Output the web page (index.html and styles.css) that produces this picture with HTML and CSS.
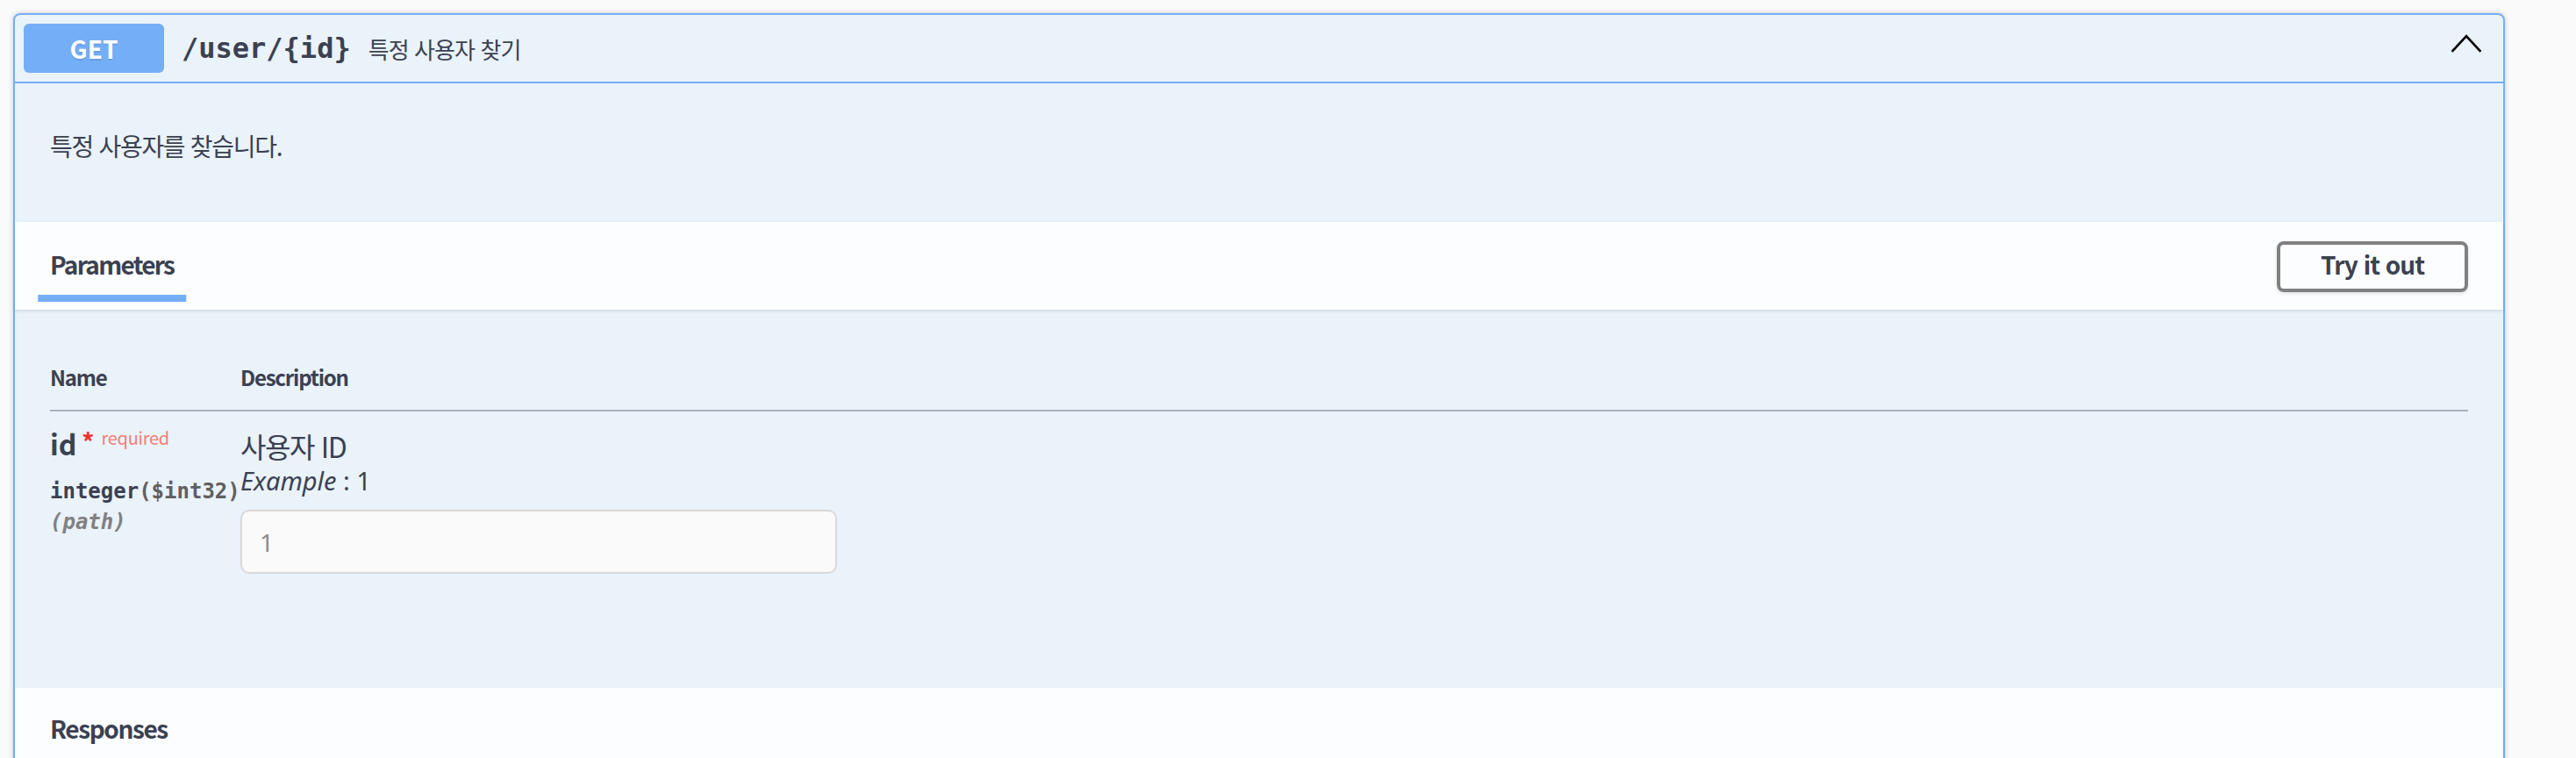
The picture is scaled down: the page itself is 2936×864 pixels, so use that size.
FILE: index.html
```html
<!DOCTYPE html>
<html lang="ko">
<head>
<meta charset="utf-8">
<title>GET /user/{id}</title>
<link rel="stylesheet" href="styles.css">
</head>
<body>
<div class="opblock">
  <div class="summary">
    <span class="method">GET</span>
    <span class="path">/user/{id}</span>
    <span class="summary-desc">특정 사용자 찾기</span>
    <svg class="arrow" width="36" height="22" viewBox="0 0 36 22" aria-hidden="true">
      <polyline points="1.6,19.8 18,2.2 34.4,19.8" fill="none" stroke="#000" stroke-width="2.7"/>
    </svg>
  </div>
  <div class="op-body">
    <div class="desc-wrapper"><p>특정 사용자를 찾습니다.</p></div>
    <div class="section-header">
      <div class="tab-item"><span class="tab-title">Parameters</span></div>
      <button class="try-out">Try it out</button>
    </div>
    <div class="table-container">
      <table class="parameters">
        <colgroup><col class="col-name"><col class="col-desc"></colgroup>
        <thead>
          <tr><th>Name</th><th>Description</th></tr>
        </thead>
        <tbody>
          <tr>
            <td class="cell-name">
              <div class="param-name">id<span class="req-star">*</span><span class="req-label">required</span></div>
              <div class="param-type">integer<span class="param-format">($int32)</span></div>
              <div class="param-in">(path)</div>
            </td>
            <td class="cell-desc">
              <div class="param-md">사용자 ID</div>
              <div class="param-example"><i>Example</i> : 1</div>
              <input class="param-input" type="text" value="1" disabled>
            </td>
          </tr>
        </tbody>
      </table>
    </div>
    <div class="section-header responses">
      <h4 class="section-title">Responses</h4>
    </div>
    <div class="responses-body"></div>
  </div>
</div>
</body>
</html>
```

FILE: styles.css
```css
html, body {
  overflow: hidden;
}
body {
  margin: 0;
  padding: 15px 0 0 15px;
  background: #fafafa;
  font-family: "Noto Sans CJK KR", "Noto Sans", sans-serif;
  color: #3b4151;
}
.opblock {
  box-sizing: border-box;
  width: 2840px;
  border: 2px solid #74aef7;
  border-radius: 8px;
  background: rgba(97, 175, 254, 0.1);
  box-shadow: 0 0 6px rgba(0, 0, 0, 0.19);
}
.summary {
  display: flex;
  align-items: center;
  padding: 10px;
  border-bottom: 2px solid #74aef7;
}
.method {
  min-width: 160px;
  padding: 12px 0;
  line-height: 32px;
  background: #74aef7;
  border-radius: 6px;
  color: #fff;
  font-size: 28px;
  font-weight: 700;
  text-align: center;
  text-shadow: 0 2px 0 rgba(0, 0, 0, 0.1);
}
.path {
  padding: 0 20px;
  font-family: "DejaVu Sans Mono", monospace;
  font-size: 32px;
  font-weight: 700;
  color: #3b4151;
}
.summary-desc {
  flex: 1;
  font-size: 26px;
  letter-spacing: -0.9px;
  color: #3b4151;
}
.arrow {
  align-self: flex-start;
  margin: 12px 14px 0 0;
}
.desc-wrapper {
  padding: 51px 40px 67px;
}
.desc-wrapper p {
  margin: 0;
  font-size: 28px;
  line-height: 40px;
  letter-spacing: -1.3px;
}
.section-header {
  box-sizing: border-box;
  display: flex;
  align-items: center;
  justify-content: space-between;
  min-height: 100px;
  padding: 16px 40px;
  background: rgba(255, 255, 255, 0.8);
  box-shadow: 0 2px 4px rgba(0, 0, 0, 0.1);
}
.tab-item {
  display: inline-block;
  position: relative;
  line-height: 40px;
  font-size: 28px;
  font-weight: 700;
  letter-spacing: -1.7px;
  margin-top: -4px;
}
.tab-title::after {
  content: "";
  position: absolute;
  left: 50%;
  bottom: -23px;
  width: 120%;
  height: 8px;
  transform: translateX(-50%);
  background: #74aef7;
}
.try-out {
  padding: 7px 46px 13px;
  line-height: 30px;
  border: 4px solid #808080;
  border-radius: 8px;
  background: transparent;
  box-shadow: 0 2px 4px rgba(0, 0, 0, 0.1);
  font-family: "Noto Sans CJK KR", "Noto Sans", sans-serif;
  font-size: 28px;
  font-weight: 700;
  letter-spacing: -1px;
  color: #3b4151;
  margin-top: 2px;
}
.table-container {
  padding: 40px;
}
.parameters {
  width: 100%;
  border-collapse: collapse;
}
.col-name {
  width: 217px;
}
.parameters th {
  padding: 24px 0;
  line-height: 26px;
  font-size: 24px;
  font-weight: 700;
  letter-spacing: -1.2px;
  text-align: left;
  border-bottom: 2px solid #abb1bb;
}
.parameters td {
  vertical-align: top;
  padding: 21px 0 90px;
}
.param-name {
  font-size: 32px;
  font-weight: 700;
  line-height: 30px;
  margin-bottom: 10px;
  white-space: nowrap;
}
.req-star {
  position: relative;
  top: -4px;
  margin-left: 6px;
  font-size: 28px;
  font-weight: 700;
  color: #f2312f;
}
.req-label {
  position: relative;
  top: -12px;
  margin-left: 8px;
  font-size: 20px;
  font-weight: 400;
  letter-spacing: -0.3px;
  color: #f08078;
}
.param-type {
  padding: 10px 0 7px;
  font-family: "DejaVu Sans Mono", monospace;
  font-size: 24px;
  line-height: 28px;
  font-weight: 700;
  white-space: nowrap;
}
.param-format {
  color: #606060;
}
.param-in {
  font-family: "DejaVu Sans Mono", monospace;
  font-size: 24px;
  line-height: 28px;
  font-weight: 700;
  font-style: italic;
  color: #808080;
}
.param-md {
  font-size: 32px;
  line-height: 36px;
  letter-spacing: -1.4px;
}
.param-example {
  margin-top: 4px;
  font-family: "Noto Sans", sans-serif;
  font-size: 29px;
  line-height: 36px;
}
.param-input {
  display: block;
  box-sizing: border-box;
  width: 680px;
  height: 73px;
  margin-top: 15px;
  padding: 0 20px;
  border: 2px solid #d9d9d9;
  border-radius: 10px;
  background: #fafafa;
  font-family: "Noto Sans", sans-serif;
  font-size: 28px;
  color: #8b8b8b;
}
.responses {
  padding: 12px 40px 20px;
}
.section-title {
  margin: 0;
  font-size: 28px;
  line-height: 40px;
  font-weight: 700;
  letter-spacing: -1.4px;
}
.responses-body {
  height: 60px;
}
```
